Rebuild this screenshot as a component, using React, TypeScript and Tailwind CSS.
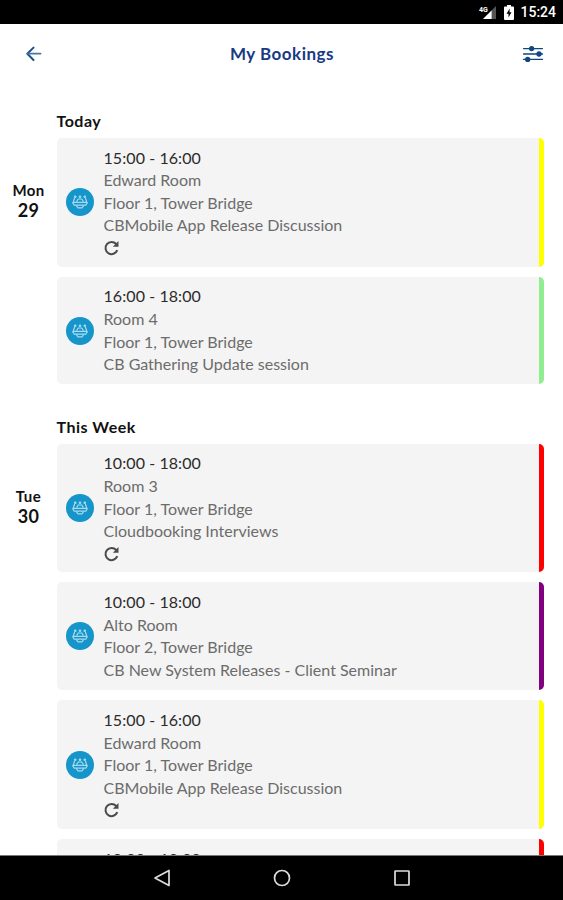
import React from "react";

// --- Icons ---
const BackIcon = () => (
  <svg className="h-4 w-4" viewBox="0 0 16 16" fill="none" stroke="#1c4f88" strokeWidth="2" strokeLinecap="round" strokeLinejoin="round">
    <path d="M7.5 1.6L1.3 7.700 7.500 14" />
    <path d="M2 7.700h12.500" strokeWidth="1.8" stroke="#4a76a5" />
  </svg>
);

const FilterIcon = () => (
  <svg className="h-[18px] w-[22px]" viewBox="0 0 22 18" fill="#12467f" stroke="#12467f" strokeWidth="1.3">
    <path d="M1.500 3.600h19M1.500 9h19M1.500 14.400h19" strokeLinecap="round" />
    <circle cx="9.600" cy="3.600" r="2" />
    <circle cx="17" cy="9" r="2" />
    <circle cx="5.700" cy="14.400" r="2" />
  </svg>
);

const MeetingIcon = () => (
  <svg className="h-7 w-7 shrink-0" viewBox="0 0 28 28" fill="none" stroke="#a9dbf0">
    <circle cx="14" cy="14" r="14" fill="#1595ca" stroke="none" />
    <g fill="#a9dbf0" stroke="none">
      <circle cx="9.200" cy="8.800" r="1.300" />
      <circle cx="14" cy="8.800" r="1.300" />
      <circle cx="18.800" cy="8.800" r="1.300" />
    </g>
    <path d="M8.600 10l-1.400 4.300h13.600L19.400 10M10.600 13.500l1.600-2.500h3.600l1.600 2.500" strokeWidth="1.200" />
    <path d="M6.500 14.500l1.700 2.600h11.600l1.700-2.600" strokeWidth="1.200" />
    <path d="M10.200 17.500l1.800 2.300h4l1.800-2.300" strokeWidth="1.200" />
  </svg>
);

const RepeatIcon = () => (
  <svg className="h-4 w-4" viewBox="0 0 16 16" fill="none" stroke="#4a4a4a" strokeWidth="2">
    <path d="M13.300 10.200A6.100 6.100 0 1 1 12.200 4" />
    <path d="M14.500 .9v5.900H8.800z" fill="#4a4a4a" stroke="none" />
  </svg>
);

const SignalIcon = () => (
  <svg className="h-[15px] w-[18px]" viewBox="0 0 18 15">
    <path d="M17 1v13H4z" fill="#555" />
    <path d="M12.600 5.400V14H4z" fill="#fff" />
    <text x="0" y="6.500" fill="#fff" fontSize="7" fontWeight="700" fontFamily="Roboto, sans-serif">4G</text>
  </svg>
);

const BatteryIcon = () => (
  <svg className="h-[15px] w-[10px]" viewBox="0 0 10 15">
    <path d="M3 0h4v1.500h2q1 0 1 1V14q0 1-1 1H1q-1 0-1-1V2.500q0-1 1-1h2z" fill="#fff" />
    <path d="M5.700 3.500L2.500 8.700h2v3.800l3-5.200h-2z" fill="#000" />
  </svg>
);

type Booking = {
  time: string;
  room: string;
  place: string;
  title: string;
  repeats?: boolean;
  bar: string;
};

type Group = {
  label: string;
  day: string;
  date: string;
  bookings: Booking[];
};

const groups: Group[] = [
  {
    label: "Today",
    day: "Mon",
    date: "29",
    bookings: [
      { time: "15:00 - 16:00", room: "Edward Room", place: "Floor 1, Tower Bridge", title: "CBMobile App Release Discussion", repeats: true, bar: "bg-[#ffff00]" },
      { time: "16:00 - 18:00", room: "Room 4", place: "Floor 1, Tower Bridge", title: "CB Gathering Update session", bar: "bg-[#90ee90]" },
    ],
  },
  {
    label: "This Week",
    day: "Tue",
    date: "30",
    bookings: [
      { time: "10:00 - 18:00", room: "Room 3", place: "Floor 1, Tower Bridge", title: "Cloudbooking Interviews", repeats: true, bar: "bg-[#ff0000]" },
      { time: "10:00 - 18:00", room: "Alto Room", place: "Floor 2, Tower Bridge", title: "CB New System Releases - Client Seminar", bar: "bg-[#800080]" },
      { time: "15:00 - 16:00", room: "Edward Room", place: "Floor 1, Tower Bridge", title: "CBMobile App Release Discussion", repeats: true, bar: "bg-[#ffff00]" },
      { time: "10:00 - 18:00", room: "Room 3", place: "Floor 1, Tower Bridge", title: "Cloudbooking Interviews", repeats: true, bar: "bg-[#ff0000]" },
    ],
  },
];

const BookingCard: React.FC<{ booking: Booking }> = ({ booking }) => (
  <div className={`flex shrink-0 overflow-hidden rounded-[5px] bg-[#f4f4f4] ${booking.repeats ? "h-[128.5px]" : "h-[107.5px]"}`}>
    <div className="flex w-[46.5px] items-center pl-[9px]">
      <MeetingIcon />
    </div>
    <div className="flex-1 pt-[8.7px] text-base leading-[22.6px] text-[#6c6c6c]">
      <p className="tracking-[0.08px] text-[#2b2b2b]">{booking.time}</p>
      <p>{booking.room}</p>
      <p>{booking.place}</p>
      <p>{booking.title}</p>
      {booking.repeats && (
        <div className="flex h-[22px] items-center">
          <RepeatIcon />
        </div>
      )}
    </div>
    <div className={`w-[5px] ${booking.bar}`} />
  </div>
);

const BookingGroup: React.FC<{ group: Group }> = ({ group }) => (
  <section>
    <h2 className="pl-[56.5px] text-base font-bold leading-5 tracking-[0.5px] text-[#111]">{group.label}</h2>
    <div className="mt-[7px] flex">
      <div className="w-[57px] pt-[42px] text-center font-bold text-[#111]">
        <p className="text-[15px] leading-5 tracking-[0.4px]">{group.day}</p>
        <p className="text-lg leading-[21px] tracking-[0.3px]">{group.date}</p>
      </div>
      <div className="flex w-[487px] flex-col gap-[10.3px]">
        {group.bookings.map((booking, i) => (
          <BookingCard key={i} booking={booking} />
        ))}
      </div>
    </div>
  </section>
);

export default function App() {
  return (
    <div className="flex h-[900px] w-[563px] flex-col overflow-hidden bg-white font-['Lato',sans-serif]">
      <div className="flex h-6 shrink-0 items-center justify-end bg-black pr-[7px] text-white">
        <SignalIcon />
        <span className="ml-[7px]">
          <BatteryIcon />
        </span>
        <span className="ml-[6px] font-['Roboto',sans-serif] text-sm font-medium">15:24</span>
      </div>

      <header className="flex h-[60px] shrink-0 items-center justify-between pl-[26px] pr-[19px]">
        <BackIcon />
        <h1 className="text-[17px] font-bold tracking-[0.5px] text-[#173a83]">My Bookings</h1>
        <FilterIcon />
      </header>

      <main className="flex min-h-0 flex-1 flex-col gap-[32.4px] overflow-hidden pt-[27px]">
        {groups.map((group) => (
          <BookingGroup key={group.label} group={group} />
        ))}
      </main>

      <nav className="flex h-[45px] shrink-0 items-center justify-center gap-[102px] border-t border-[#777] bg-black">
        <svg className="h-[18px] w-[18px]" viewBox="0 0 18 18" fill="none" stroke="#ddd" strokeWidth="1.7" strokeLinejoin="round">
          <path d="M16 1.500v15L2 9z" />
        </svg>
        <svg className="h-[18px] w-[18px]" viewBox="0 0 18 18" fill="none" stroke="#ddd" strokeWidth="1.7">
          <circle cx="9" cy="9" r="7.500" />
        </svg>
        <svg className="h-[18px] w-[18px]" viewBox="0 0 18 18" fill="none" stroke="#ddd" strokeWidth="1.7">
          <rect x="2" y="2" width="14" height="14" rx=".5" />
        </svg>
      </nav>
    </div>
  );
}
